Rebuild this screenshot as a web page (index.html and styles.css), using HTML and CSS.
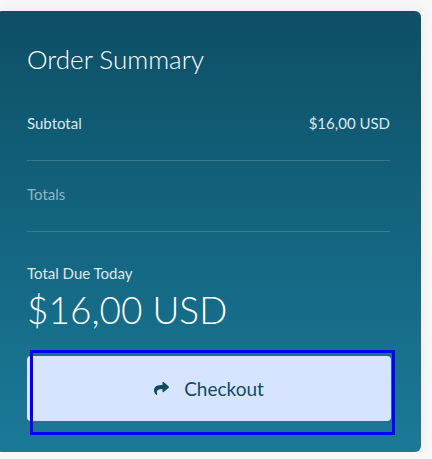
FILE: index.html
```html
<!DOCTYPE html>
<html>
<head>
<meta charset="utf-8">
<link rel="stylesheet" href="styles.css">
</head>
<body>
<div class="card">
  <h2 class="title">Order Summary</h2>
  <div class="row">
    <span>Subtotal</span>
    <span>$16,00 USD</span>
  </div>
  <div class="row muted">
    <span>Totals</span>
  </div>
  <div class="due-label">Total Due Today</div>
  <div class="due-amount">$16,00 USD</div>
  <div class="btn-wrap">
    <button class="btn">
      <svg class="icon" viewBox="0 0 512 512"><path d="M503.691 189.836L327.687 37.851C312.281 24.546 288 35.347 288 56.015v80.053C127.371 137.907 0 170.1 0 322.326c0 61.441 39.581 122.309 83.333 154.132 13.653 9.931 33.111-2.533 28.077-18.631C66.066 312.814 132.917 274.316 288 272.085V360c0 20.7 24.3 31.453 39.687 18.164l176.004-152c11.071-9.562 11.086-26.753 0-36.328z"/></svg>
      <span>Checkout</span>
    </button>
    <div class="focus-box"></div>
  </div>
</div>
</body>
</html>
```
FILE: styles.css
```css
html, body {
  margin: 0;
  padding: 0;
  background: #f8f8f8;
}
body {
  padding-top: 11px;
  font-family: Lato, "Open Sans", sans-serif;
}
.card {
  box-sizing: border-box;
  width: 425px;
  margin-left: -4px;
  padding: 30px 31px 31px 31px;
  border-radius: 6px;
  background: linear-gradient(180deg, #0d4f66 0%, #1a7a98 100%);
  box-shadow: 0 0 14px rgba(0, 0, 0, 0.07);
  color: #fff;
}
.title {
  margin: 0 0 14px 0;
  font-size: 26px;
  line-height: 36px;
  font-weight: 300;
  color: #fff;
}
.row {
  display: flex;
  justify-content: space-between;
  padding: 20px 0 25px 0;
  font-size: 15px;
  line-height: 24px;
  color: #dbe8ee;
  border-bottom: 1px solid rgba(255, 255, 255, 0.16);
}
.row.muted {
  padding: 21px 0 25px 0;
  color: #8fb6c6;
}
.due-label {
  margin-top: 30px;
  font-size: 15px;
  line-height: 22px;
  color: #dbe8ee;
}
.due-amount {
  margin-top: 3px;
  font-size: 37px;
  line-height: 46px;
  font-weight: 300;
  color: #fff;
}
.btn-wrap {
  position: relative;
  margin-top: 23px;
}
.btn {
  display: flex;
  align-items: center;
  justify-content: center;
  gap: 15px;
  width: 364px;
  height: 65px;
  border: none;
  border-radius: 4px;
  background: #d7e4ff;
  color: #0f4a62;
  font-family: Lato, "Open Sans", sans-serif;
  font-size: 19px;
  padding: 0;
}
.icon {
  width: 15px;
  height: 15px;
  fill: #0f4a62;
}
.focus-box {
  position: absolute;
  left: 3px;
  top: -6px;
  width: 365px;
  height: 85px;
  box-sizing: border-box;
  border: 3px solid #0000f5;
  pointer-events: none;
}
```
